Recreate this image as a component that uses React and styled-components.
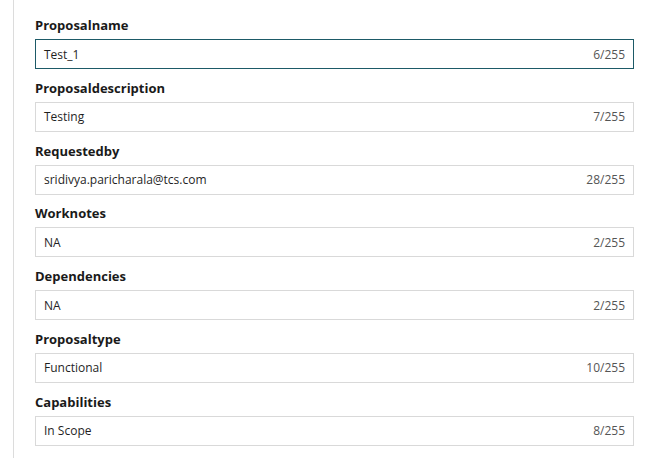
import styled, { createGlobalStyle } from 'styled-components';

const GlobalStyle = createGlobalStyle`
  html, body {
    margin: 0;
    padding: 0;
    background: #fff;
  }
  body {
    font-family: "Open Sans", "Noto Sans", sans-serif;
    color: #222;
  }
`;

const Panel = styled.div`
  margin-left: 13px;
  border-left: 1px solid #dcdcdc;
  padding: 18px 14px 10px 21px;
  min-height: 430px;
`;

const Field = styled.div`
  display: flex;
  flex-direction: column;
  margin-bottom: 11.8px;
`;

const Label = styled.label`
  font-size: 13px;
  font-weight: 700;
  color: #1a1a1a;
  height: 21px;
  line-height: 15px;
`;

const Box = styled.div`
  display: flex;
  align-items: center;
  justify-content: space-between;
  height: 30px;
  box-sizing: border-box;
  padding: 0 8px 0 8px;
  border: 1px solid ${(p) => (p.$focused ? '#1d5a67' : '#d9d9d9')};
  font-size: 12px;
  color: #1f1f1f;
`;

const Counter = styled.span`
  color: #555;
  font-size: 12px;
`;

const fields = [
  { label: 'Proposalname', value: 'Test_1', focused: true },
  { label: 'Proposaldescription', value: 'Testing' },
  { label: 'Requestedby', value: 'sridivya.paricharala@tcs.com' },
  { label: 'Worknotes', value: 'NA' },
  { label: 'Dependencies', value: 'NA' },
  { label: 'Proposaltype', value: 'Functional' },
  { label: 'Capabilities', value: 'In Scope' },
];

export default function App() {
  return (
    <>
      <GlobalStyle />
      <Panel>
        {fields.map((f) => (
          <Field key={f.label}>
            <Label>{f.label}</Label>
            <Box $focused={f.focused}>
              <span>{f.value}</span>
              <Counter>{f.value.length}/255</Counter>
            </Box>
          </Field>
        ))}
      </Panel>
    </>
  );
}
